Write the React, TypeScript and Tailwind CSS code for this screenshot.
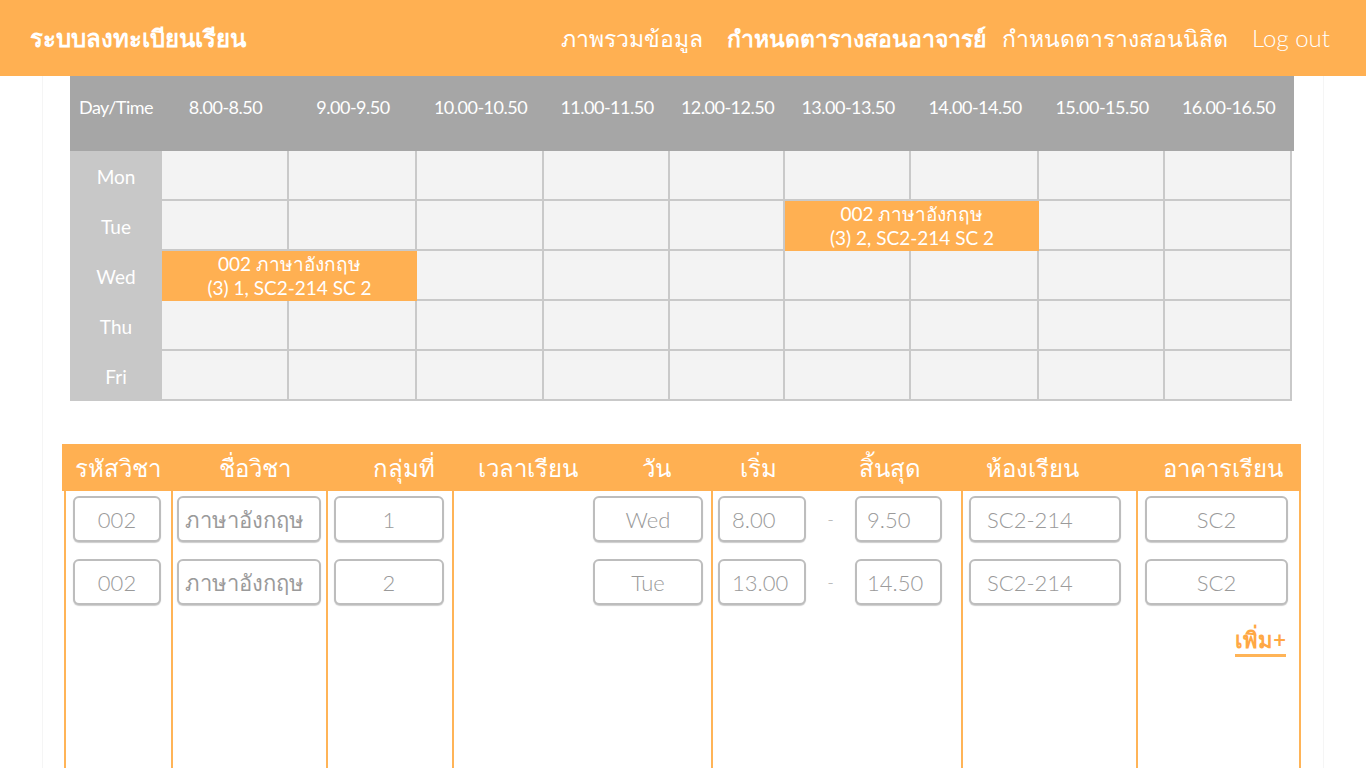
import clsx from "clsx";

const days = ["Mon", "Tue", "Wed", "Thu", "Fri"];
const times = [
  "8.00-8.50",
  "9.00-9.50",
  "10.00-10.50",
  "11.00-11.50",
  "12.00-12.50",
  "13.00-13.50",
  "14.00-14.50",
  "15.00-15.50",
  "16.00-16.50",
];

const events = [
  { day: "Tue", start: 5, span: 2, title: "002 ภาษาอังกฤษ", detail: "(3) 2, SC2-214 SC 2" },
  { day: "Wed", start: 0, span: 2, title: "002 ภาษาอังกฤษ", detail: "(3) 1, SC2-214 SC 2" },
];

const courses = [
  { code: "002", name: "ภาษาอังกฤษ", group: "1", day: "Wed", start: "8.00", end: "9.50", room: "SC2-214", building: "SC2" },
  { code: "002", name: "ภาษาอังกฤษ", group: "2", day: "Tue", start: "13.00", end: "14.50", room: "SC2-214", building: "SC2" },
];

function Navbar() {
  return (
    <header className="h-[76px] bg-[#ffb052] flex items-center justify-between pl-[30px] pr-[36px] text-white">
      <h1 className="text-[24px] font-bold">ระบบลงทะเบียนเรียน</h1>
      <nav className="flex items-center text-[23px] font-light">
        <a className="mr-[24px]">ภาพรวมข้อมูล</a>
        <a className="mr-[16px] font-bold">กำหนดตารางสอนอาจารย์</a>
        <a className="mr-[24px]">กำหนดตารางสอนนิสิต</a>
        <a className="text-[24px]">Log out</a>
      </nav>
    </header>
  );
}

function Timetable() {
  return (
    <div className="ml-[27px] w-[1224px]">
      <div className="grid grid-cols-[92px_127px_128px_127px_126px_115px_126px_128px_126px_127px] bg-[#a6a6a6] h-[75px] text-white text-[18px]">
        <div className="flex justify-center pt-[18px] tracking-[-0.5px]">Day/Time</div>
        {times.map((t) => (
          <div key={t} className="flex justify-center pt-[18px] tracking-[-0.5px]">
            {t}
          </div>
        ))}
      </div>
      <div className="grid grid-cols-[92px_127px_128px_127px_126px_115px_126px_128px_126px_127px]">
        {days.map((day) => {
          const cells = [];
          for (let i = 0; i < times.length; i++) {
            const ev = events.find((e) => e.day === day && e.start === i);
            if (ev) {
              cells.push(
                <div
                  key={day + i}
                  className="col-span-2 h-[50px] bg-[#ffb052] flex flex-col items-center justify-center text-white text-[19px] leading-[24px]"
                >
                  <span>{ev.title}</span>
                  <span>{ev.detail}</span>
                </div>
              );
              i += ev.span - 1;
            } else {
              cells.push(
                <div key={day + i} className="h-[50px] bg-[#f3f3f3] border-r-2 border-b-2 border-[#c9c9c9]" />
              );
            }
          }
          return [
            <div key={day} className="h-[50px] bg-[#c8c8c8] flex items-center justify-center pt-[3px] text-white text-[19px]">
              {day}
            </div>,
            ...cells,
          ];
        })}
      </div>
    </div>
  );
}

function Box({ children, className }: { children: React.ReactNode; className?: string }) {
  return (
    <div
      className={clsx(
        "h-[46px] border-2 border-[#bdbdbd] rounded-md bg-white flex items-center text-[22px] font-light text-[#9a9a9a] shadow-[0_1px_1px_rgba(0,0,0,0.2)]",
        className
      )}
    >
      {children}
    </div>
  );
}

function CourseTable() {
  const col = "flex flex-col gap-[17px] pt-[5px] border-l-2 border-[#ffb457]";
  return (
    <div className="ml-[19px] mt-[43px] w-[1239px]">
      <div className="h-[47px] bg-[#ffb052] grid grid-cols-[107px_155px_126px_259px_250px_175px_165px] pl-[2px] text-white text-[24px] font-light">
        <div className="flex items-center justify-center">รหัสวิชา</div>
        <div className="flex items-center justify-center pl-3">ชื่อวิชา</div>
        <div className="flex items-center justify-center pl-[30px]">กลุ่มที่</div>
        <div className="flex items-center justify-between pl-[26px] pr-[40px]">
          <span>เวลาเรียน</span>
          <span>วัน</span>
        </div>
        <div className="flex items-center justify-between pl-[29px] pr-[40px]">
          <span>เริ่ม</span>
          <span>สิ้นสุด</span>
        </div>
        <div className="flex items-center pl-[25px]">ห้องเรียน</div>
        <div className="flex items-center justify-center pl-2">อาคารเรียน</div>
      </div>
      <div className="h-[300px] grid grid-cols-[107px_155px_126px_259px_250px_175px_165px] pl-[2px]">
        <div className={clsx(col, "pl-[7px]")}>
          {courses.map((c, i) => (
            <Box key={i} className="w-[88px] justify-center">
              {c.code}
            </Box>
          ))}
        </div>
        <div className={clsx(col, "pl-[4px]")}>
          {courses.map((c, i) => (
            <Box key={i} className="w-[144px] pl-[6px]">
              {c.name}
            </Box>
          ))}
        </div>
        <div className={clsx(col, "pl-[6px]")}>
          {courses.map((c, i) => (
            <Box key={i} className="w-[110px] justify-center">
              {c.group}
            </Box>
          ))}
        </div>
        <div className={clsx(col, "items-end pr-[8px]")}>
          {courses.map((c, i) => (
            <Box key={i} className="w-[110px] justify-center">
              {c.day}
            </Box>
          ))}
        </div>
        <div className={clsx(col, "pl-[5px]")}>
          {courses.map((c, i) => (
            <div key={i} className="flex items-center">
              <Box className="w-[88px] pl-[12px]">{c.start}</Box>
              <span className="w-[49px] text-center text-[18px] font-light text-[#aaa]">-</span>
              <Box className="w-[87px] pl-[10px]">{c.end}</Box>
            </div>
          ))}
        </div>
        <div className={clsx(col, "pl-[6px]")}>
          {courses.map((c, i) => (
            <Box key={i} className="w-[152px] pl-[16px]">
              {c.room}
            </Box>
          ))}
        </div>
        <div className={clsx(col, "pl-[7px] border-r-2")}>
          {courses.map((c, i) => (
            <Box key={i} className="w-[143px] justify-center">
              {c.building}
            </Box>
          ))}
          <div className="flex justify-end pr-[13px] mt-[4px]">
            <button className="text-[22px] font-bold text-[#ffa844] border-b-[3px] border-[#ffb457] leading-[28px]">
              เพิ่ม+
            </button>
          </div>
        </div>
      </div>
    </div>
  );
}

export default function App() {
  return (
    <div className="bg-white font-['Lato','Noto_Sans',sans-serif]">
      <Navbar />
      <main className="mx-[42px] border-x border-[#f5f5f5]">
        <Timetable />
        <CourseTable />
      </main>
    </div>
  );
}
